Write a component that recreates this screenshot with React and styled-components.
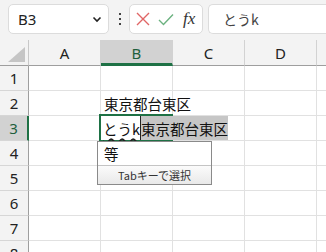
import React from "react";
import styled, { createGlobalStyle } from "styled-components";

const GlobalStyle = createGlobalStyle`
  html, body {
    margin: 0;
    padding: 0;
    background: #ffffff;
    overflow: hidden;
  }
  * {
    box-sizing: border-box;
  }
`;

const ui = `"Noto Sans", "Noto Sans CJK JP", sans-serif`;
const jp = `"Noto Sans CJK JP", sans-serif`;
const green = "#1e7145";

const Page = styled.div`
  width: 326px;
  height: 252px;
  overflow: hidden;
  background: #f3f3f3;
  font-family: ${ui};
`;

const FormulaBar = styled.div`
  display: flex;
  align-items: center;
  height: 40px;
  padding: 4px 0 6px 8px;
`;

const NameBox = styled.div`
  display: flex;
  align-items: center;
  justify-content: space-between;
  width: 101px;
  height: 30px;
  padding: 0 6px 0 9px;
  background: #fff;
  border: 1px solid #dcdcdc;
  border-radius: 5px;
  font-size: 15px;
  color: #222;
`;

const Dots = styled.div`
  display: flex;
  flex-direction: column;
  gap: 3px;
  margin: 0 8px 0 10px;
  span {
    width: 2px;
    height: 2px;
    background: #444;
  }
`;

const ButtonBox = styled.div`
  display: flex;
  align-items: center;
  gap: 8px;
  width: 74px;
  height: 30px;
  padding: 0 0 0 6px;
  background: #fff;
  border: 1px solid #dcdcdc;
  border-radius: 5px;
`;

const Fx = styled.span`
  font-family: "Liberation Serif", serif;
  font-style: italic;
  font-size: 17px;
  color: #333;
  margin-left: 1px;
`;

const FormulaInput = styled.div`
  flex: 1;
  display: flex;
  align-items: center;
  height: 30px;
  margin-left: 5px;
  padding-left: 14px;
  background: #fff;
  border: 1px solid #dcdcdc;
  border-right: none;
  border-radius: 5px 0 0 5px;
  font-family: ${jp};
  font-size: 14px;
  color: #444;
`;

const Sheet = styled.div`
  display: grid;
  grid-template-columns: 29px repeat(5, 72px);
  grid-template-rows: 26px;
  grid-auto-rows: 25px;
  background: #fff;
`;

const Corner = styled.div`
  position: relative;
  background: #f3f3f3;
  border-right: 1px solid #c8c8c8;
  border-bottom: 1px solid #9e9e9e;
  &::after {
    content: "";
    position: absolute;
    right: 3px;
    bottom: 3px;
    width: 0;
    height: 0;
    border-left: 17px solid transparent;
    border-bottom: 15px solid #c5c5c5;
  }
`;

const ColHead = styled.div`
  display: flex;
  align-items: center;
  justify-content: center;
  background: ${(p) => (p.$selected ? "#d2d2d2" : "#f3f3f3")};
  border-right: 1px solid #d2d2d2;
  border-bottom: ${(p) => (p.$selected ? `3px solid ${green}` : "1px solid #9e9e9e")};
  padding-top: ${(p) => (p.$selected ? "2px" : "0")};
  font-size: 15px;
  color: ${(p) => (p.$selected ? "#1f5f3d" : "#222")};
`;

const RowHead = styled.div`
  display: flex;
  align-items: center;
  justify-content: center;
  background: ${(p) => (p.$selected ? "#d2d2d2" : "#f3f3f3")};
  border-right: ${(p) => (p.$selected ? `2px solid ${green}` : "1px solid #9e9e9e")};
  border-bottom: 1px solid #d6d6d6;
  font-size: 15px;
  color: ${(p) => (p.$selected ? "#1f5f3d" : "#222")};
`;

const Cell = styled.div`
  position: relative;
  display: flex;
  align-items: center;
  padding: 1px 0 0 3px;
  border-right: 1px solid #e1e1e1;
  border-bottom: 1px solid #e1e1e1;
  font-family: ${jp};
  font-size: 14.5px;
  color: #111;
  white-space: nowrap;
  z-index: ${(p) => (p.$active ? 2 : 0)};
  &::before {
    content: "";
    display: ${(p) => (p.$active ? "block" : "none")};
    position: absolute;
    left: -2px;
    top: -2px;
    right: -1px;
    bottom: -1px;
    border: 2px solid ${green};
    pointer-events: none;
  }
`;

const Editor = styled.div`
  position: absolute;
  left: 0;
  top: 0;
  bottom: 0;
  display: flex;
  align-items: stretch;
  z-index: 3;
`;

const Composing = styled.span`
  display: flex;
  align-items: center;
  padding: 1px 0 0 2px;
  background: #fff;
  text-decoration: underline wavy #222 1.5px;
  text-underline-offset: 3px;
  border-right: 1px solid #222;
`;

const Guess = styled.span`
  display: flex;
  align-items: center;
  padding: 1px 0 0 0;
  background: #c6c6c6;
`;

const Suggest = styled.div`
  position: absolute;
  left: -4px;
  top: calc(100% + 1px);
  width: 115px;
  background: #fff;
  border: 1px solid #8a8a8a;
  z-index: 4;
`;

const SuggestItem = styled.div`
  display: flex;
  align-items: center;
  height: 23px;
  padding-left: 6px;
  font-family: ${jp};
  font-size: 14.5px;
  color: #111;
`;

const SuggestFooter = styled.div`
  display: flex;
  align-items: center;
  justify-content: center;
  height: 19px;
  border-top: 1px solid #c4c4c4;
  background: linear-gradient(#fbfbfb, #e9e9e9);
  font-family: ${jp};
  font-size: 11px;
  color: #333;
`;

const Chevron = () => (
  <svg width="10" height="7" viewBox="0 0 10 7">
    <path d="M1.5 1.5 L5 5 L8.5 1.5" fill="none" stroke="#222" strokeWidth="1.6" />
  </svg>
);

const Cross = () => (
  <svg width="14" height="14" viewBox="0 0 14 14">
    <path d="M1 1 L13 13 M13 1 L1 13" stroke="#e06666" strokeWidth="1.4" fill="none" />
  </svg>
);

const Check = () => (
  <svg width="16" height="13" viewBox="0 0 16 13">
    <path d="M1 7 L5.5 11.5 L15 1.5" stroke="#6cb280" strokeWidth="1.4" fill="none" />
  </svg>
);

// E is only a sliver at the right edge, so its letter is left off
const columns = ["A", "B", "C", "D", "E"];
const shownHead = { E: "" };

const cellText = {
  B2: "東京都台東区",
};

export default function App() {
  const rows = [1, 2, 3, 4, 5, 6, 7, 8];
  return (
    <>
      <GlobalStyle />
      <Page>
        <FormulaBar>
          <NameBox>
            <span>B3</span>
            <Chevron />
          </NameBox>
          <Dots>
            <span />
            <span />
            <span />
          </Dots>
          <ButtonBox>
            <Cross />
            <Check />
            <Fx>fx</Fx>
          </ButtonBox>
          <FormulaInput>とうk</FormulaInput>
        </FormulaBar>
        <Sheet>
          <Corner />
          {columns.map((c) => (
            <ColHead key={c} $selected={c === "B"}>
              {c in shownHead ? shownHead[c] : c}
            </ColHead>
          ))}
          {rows.map((r) => (
            <React.Fragment key={r}>
              <RowHead $selected={r === 3}>{r}</RowHead>
              {columns.map((c) => {
                const id = c + r;
                if (id === "B3") {
                  return (
                    <Cell key={id} $active>
                      <Editor>
                        <Composing>とうk</Composing>
                        <Guess>東京都台東区</Guess>
                      </Editor>
                      <Suggest>
                        <SuggestItem>等</SuggestItem>
                        <SuggestFooter>Tabキーで選択</SuggestFooter>
                      </Suggest>
                    </Cell>
                  );
                }
                return <Cell key={id}>{cellText[id]}</Cell>;
              })}
            </React.Fragment>
          ))}
        </Sheet>
      </Page>
    </>
  );
}
